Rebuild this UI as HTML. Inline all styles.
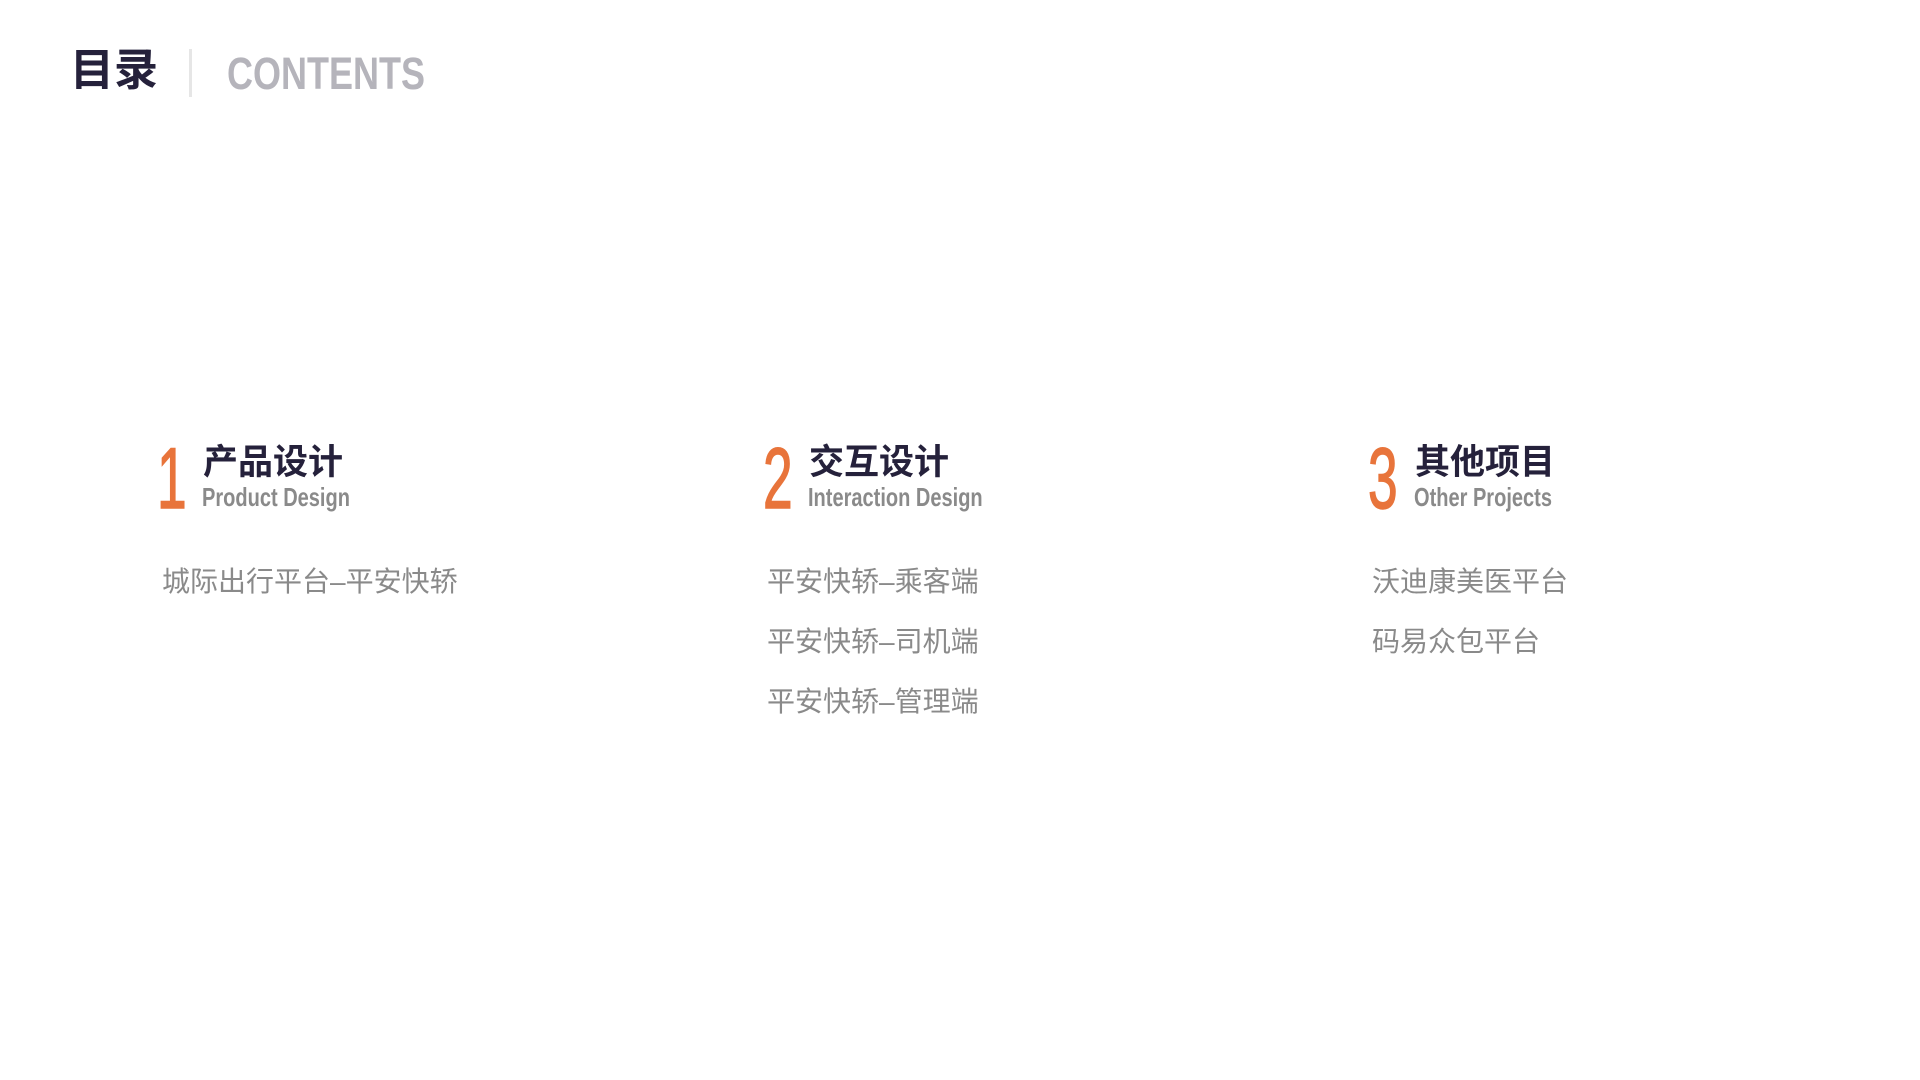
<!DOCTYPE html>
<html><head><meta charset="utf-8"><style>
html,body{margin:0;padding:0;background:#fff;width:1920px;height:1080px;overflow:hidden;position:relative}
.a{position:absolute;white-space:nowrap;line-height:1}
.cjk{font-family:"Liberation Sans","Noto Sans CJK SC",sans-serif}
.h{font-size:44px;font-weight:bold;color:#25213b}
.cond{font-family:"Liberation Sans Narrow","Liberation Sans",sans-serif;font-weight:bold;transform-origin:left top;transform:scaleX(0.77)}
.num{font-family:"Liberation Sans","Liberation Sans",sans-serif;color:#e8743b;font-size:86px;transform-origin:left top;transform:scaleX(0.62);-webkit-text-stroke:1.5px #e8743b}
.t{font-size:35px;font-weight:bold;color:#25213b}
.en{font-size:26px;color:#8a8a8a}
.it{font-size:28px;color:#8a8a8a}
</style></head><body>
<div class="a cjk h" style="left:70px;top:49px">目录</div>
<div class="a" style="left:189px;top:49px;width:3px;height:48px;background:#e6e6e6"></div>
<div class="a cond" style="left:227px;top:51px;font-size:45px;color:#b5b4bb;transform:scaleX(0.8)">CONTENTS</div>

<div class="a num" style="left:157px;top:436px">1</div>
<div class="a cjk t" style="left:203px;top:445px">产品设计</div>
<div class="a cond en" style="left:202px;top:484px">Product Design</div>
<div class="a cjk it" style="left:162px;top:568px">城际出行平台–平安快轿</div>

<div class="a num" style="left:763px;top:436px">2</div>
<div class="a cjk t" style="left:809px;top:445px">交互设计</div>
<div class="a cond en" style="left:808px;top:484px">Interaction Design</div>
<div class="a cjk it" style="left:767px;top:568px">平安快轿–乘客端</div>
<div class="a cjk it" style="left:767px;top:628px">平安快轿–司机端</div>
<div class="a cjk it" style="left:767px;top:688px">平安快轿–管理端</div>

<div class="a num" style="left:1368px;top:436px">3</div>
<div class="a cjk t" style="left:1415px;top:445px">其他项目</div>
<div class="a cond en" style="left:1414px;top:484px">Other Projects</div>
<div class="a cjk it" style="left:1372px;top:568px">沃迪康美医平台</div>
<div class="a cjk it" style="left:1372px;top:628px">码易众包平台</div>
</body></html>
